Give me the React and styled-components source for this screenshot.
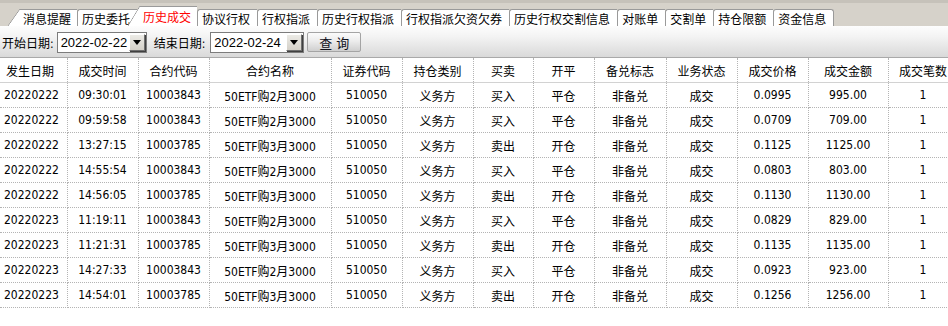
import React from "react";
import styled, { createGlobalStyle } from "styled-components";

const GlobalStyle = createGlobalStyle`
  html, body {
    margin: 0;
    padding: 0;
    background: #ffffff;
  }
  body {
    font-family: "DejaVu Sans Condensed", "DejaVu Sans", "Noto Sans CJK SC", sans-serif;
    font-stretch: condensed;
    font-size: 12px;
    color: #000;
  }
`;

const Page = styled.div`
  width: 948px;
  height: 326px;
  overflow: hidden;
  background: #fff;
`;

const TabBar = styled.div`
  height: 26px;
  box-sizing: border-box;
  display: flex;
  align-items: flex-end;
  padding-left: 20px;
  background: #d6d2ca;
  border-top: 3px solid #c6c2ba;
`;

const Tab = styled.div`
  position: relative;
  box-sizing: border-box;
  height: ${(p) => (p.$active ? "20px" : "17px")};
  margin-left: ${(p) => (p.$active ? "3px" : "0")};
  padding: 0 ${(p) => (p.$slant ? "6px" : "7px")} 0 ${(p) => (p.$slant ? "3px" : "4px")};
  display: flex;
  align-items: center;
  padding-top: ${(p) => (p.$active ? "0" : "1px")};
  background: #fff;
  border-top: 1px solid #9a9a9a;
  border-left: ${(p) => (p.$slant ? "none" : "1px solid #9a9a9a")};
  border-right: ${(p) => (p.$last ? "1px solid #9a9a9a" : "none")};
  border-top-left-radius: ${(p) => (p.$slant ? "0" : "3px")};
  border-top-right-radius: ${(p) => (p.$last ? "3px" : "0")};
  color: ${(p) => (p.$active ? "#ff0000" : "#000")};
  z-index: ${(p) => (p.$active ? 2 : 1)};
  white-space: nowrap;

  &::before {
    content: "";
    display: ${(p) => (p.$slant ? "block" : "none")};
    position: absolute;
    left: -12px;
    top: -1px;
    bottom: 0;
    width: 12px;
    background: linear-gradient(
      to top left,
      #ffffff calc(50% - 0.6px),
      #9a9a9a 50%,
      transparent calc(50% + 0.7px)
    );
  }
`;

const Toolbar = styled.div`
  height: 32px;
  box-sizing: border-box;
  display: flex;
  align-items: center;
  padding: 1px 0 0 2px;
  background: linear-gradient(#fdfdfd, #f3f3f3 35%, #d9d9d9);
  border-bottom: 1px solid #a9a9a9;
`;

const Label = styled.span`
  margin-left: ${(p) => p.$gap || 0}px;
  margin-right: ${(p) => (p.$gap ? 5 : 3)}px;
  white-space: nowrap;
`;

const DateBox = styled.div`
  width: ${(p) => p.$w}px;
  height: 21px;
  box-sizing: border-box;
  display: flex;
  align-items: center;
  justify-content: space-between;
  padding: 0 1px 0 3px;
  background: #fff;
  border: 1px solid #7c7c7c;
  font-family: "Liberation Sans", Arial, sans-serif;
  font-stretch: normal;
  font-size: 13px;
`;

const DropButton = styled.div`
  width: 16px;
  height: 17px;
  box-sizing: border-box;
  display: flex;
  align-items: center;
  justify-content: center;
  background: linear-gradient(#ecebe6, #d4d0c8);
  border: 1px solid;
  border-color: #ffffff #6f6f6f #6f6f6f #ffffff;
  box-shadow: 1px 1px 0 #404040;

  &::after {
    content: "";
    border-left: 4px solid transparent;
    border-right: 4px solid transparent;
    border-top: 5px solid #000;
    margin-top: 1px;
  }
`;

const QueryButton = styled.button`
  margin-left: 3px;
  width: 54px;
  height: 20px;
  box-sizing: border-box;
  padding: 0;
  border: 1px solid #a4a4a4;
  border-radius: 2px;
  background: linear-gradient(#fbfbfb, #ececec 45%, #cfcfcf);
  font-family: "Noto Sans CJK SC", sans-serif;
  font-size: 13px;
  color: #10101a;
  letter-spacing: 4px;
  text-indent: 4px;
`;

const TableWrap = styled.div`
  width: 948px;
  overflow: hidden;
`;

const Table = styled.table`
  width: 958px;
  table-layout: fixed;
  border-collapse: collapse;
`;

const HeadCell = styled.th`
  height: 24px;
  padding: 0 0 0 ${(p) => (p.$first ? "6px" : "0")};
  font-weight: normal;
  text-align: ${(p) => (p.$first ? "left" : "center")};
  border-right: 1px dotted #b4b4b4;
  border-bottom: 1px solid #d2d2d2;
  white-space: nowrap;
`;

const Cell = styled.td`
  height: 24px;
  padding: 0 0 0 ${(p) => (p.$first ? "4px" : "0")};
  text-align: ${(p) => (p.$first ? "left" : "center")};
  border-right: 1px dotted #b4b4b4;
  border-bottom: 1px dotted #b4b4b4;
  white-space: nowrap;
`;

const tabs = [
  "消息提醒",
  "历史委托",
  "历史成交",
  "协议行权",
  "行权指派",
  "历史行权指派",
  "行权指派欠资欠券",
  "历史行权交割信息",
  "对账单",
  "交割单",
  "持仓限额",
  "资金信息",
];

const widths = [67, 71, 71, 122, 71, 71, 60, 61, 72, 71, 71, 80, 70];

const headers = [
  "发生日期",
  "成交时间",
  "合约代码",
  "合约名称",
  "证券代码",
  "持仓类别",
  "买卖",
  "开平",
  "备兑标志",
  "业务状态",
  "成交价格",
  "成交金额",
  "成交笔数",
];

const rows = [
  ["20220222", "09:30:01", "10003843", "50ETF购2月3000", "买入", "平仓", "0.0995", "995.00"],
  ["20220222", "09:59:58", "10003843", "50ETF购2月3000", "买入", "平仓", "0.0709", "709.00"],
  ["20220222", "13:27:15", "10003785", "50ETF购3月3000", "卖出", "开仓", "0.1125", "1125.00"],
  ["20220222", "14:55:54", "10003843", "50ETF购2月3000", "买入", "平仓", "0.0803", "803.00"],
  ["20220222", "14:56:05", "10003785", "50ETF购3月3000", "卖出", "开仓", "0.1130", "1130.00"],
  ["20220223", "11:19:11", "10003843", "50ETF购2月3000", "买入", "平仓", "0.0829", "829.00"],
  ["20220223", "11:21:31", "10003785", "50ETF购3月3000", "卖出", "开仓", "0.1135", "1135.00"],
  ["20220223", "14:27:33", "10003843", "50ETF购2月3000", "买入", "平仓", "0.0923", "923.00"],
  ["20220223", "14:54:01", "10003785", "50ETF购3月3000", "卖出", "开仓", "0.1256", "1256.00"],
];

const App = () => {
  return (
    <Page>
      <GlobalStyle />
      <TabBar>
        {tabs.map((t, i) => (
          <Tab
            key={t}
            $slant={i === 0 || i === 2}
            $active={i === 2}
            $last={i === tabs.length - 1}
          >
            {t}
          </Tab>
        ))}
      </TabBar>

      <Toolbar>
        <Label>开始日期:</Label>
        <DateBox $w={90}>
          2022-02-22
          <DropButton />
        </DateBox>
        <Label $gap={7}>结束日期:</Label>
        <DateBox $w={94}>
          2022-02-24
          <DropButton />
        </DateBox>
        <QueryButton>查询</QueryButton>
      </Toolbar>

      <TableWrap>
        <Table>
          <colgroup>
            {widths.map((w, i) => (
              <col key={i} style={{ width: w }} />
            ))}
          </colgroup>
          <thead>
            <tr>
              {headers.map((h, i) => (
                <HeadCell key={h} $first={i === 0}>
                  {h}
                </HeadCell>
              ))}
            </tr>
          </thead>
          <tbody>
            {rows.map((r, i) => {
              const cells = [
                r[0], r[1], r[2], r[3], "510050", "义务方",
                r[4], r[5], "非备兑", "成交", r[6], r[7], "1",
              ];
              return (
                <tr key={i}>
                  {cells.map((c, j) => (
                    <Cell key={j} $first={j === 0}>
                      {c}
                    </Cell>
                  ))}
                </tr>
              );
            })}
          </tbody>
        </Table>
      </TableWrap>
    </Page>
  );
};

export default App;
